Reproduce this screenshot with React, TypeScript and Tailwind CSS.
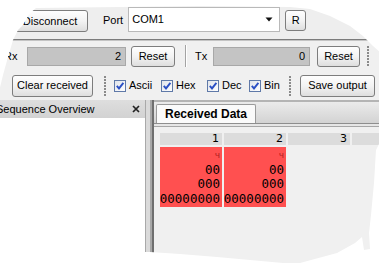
import React from "react";

function Btn({ children, className }: { children: React.ReactNode; className: string }) {
  return (
    <div
      className={`flex shrink-0 items-center justify-center rounded-[3px] border border-[#7d7d7d] bg-gradient-to-b from-[#fefefe] via-[#f3f3f3] to-[#dedede] text-[11px] text-black ${className}`}
    >
      {children}
    </div>
  );
}

function Grip({ className }: { className: string }) {
  return (
    <div className={`flex shrink-0 flex-col gap-[1px] ${className}`}>
      {[0, 1, 2, 3, 4, 5, 6].map((i) => (
        <span key={i} className="block h-[2px] w-[2px] bg-[#8a8a8a]" />
      ))}
    </div>
  );
}

function Check({ label, className }: { label: string; className: string }) {
  return (
    <div className={`flex shrink-0 items-center gap-[3px] ${className}`}>
      <svg width="12" height="12" viewBox="0 0 12 12">
        <defs>
          <linearGradient id="cbg" x1="0" y1="0" x2="1" y2="1">
            <stop offset="0" stopColor="#dfe3ea" />
            <stop offset="1" stopColor="#ffffff" />
          </linearGradient>
        </defs>
        <rect x="0.5" y="0.5" width="11" height="11" fill="url(#cbg)" stroke="#5f79a8" />
        <path d="M2.8 5.8 L5 8.4 L9.4 2.9" fill="none" stroke="#2a4fc4" strokeWidth="1.9" />
      </svg>
      <span className="text-[11px]">{label}</span>
    </div>
  );
}

export default function App() {
  return (
    <div className="relative h-[267px] w-[379px] overflow-hidden bg-white font-['Liberation_Sans',Arial,sans-serif] text-[11px] text-black">
      <div className="flex h-full flex-col">
        {/* Row 1 */}
        <div className="flex h-[39px] shrink-0 items-start bg-[#eeeeee]">
          <Btn className="ml-[12px] mt-[10px] h-[22px] w-[76px]">Disconnect</Btn>
          <span className="ml-[15px] mt-[14px] leading-[13px]">Port</span>
          <div className="ml-[5px] mt-[7px] flex h-[25px] w-[152px] shrink-0 items-center border border-[#b9b9b9] bg-white">
            <span className="ml-[3px] leading-[13px]">COM1</span>
            <svg className="ml-auto mr-[6px]" width="8" height="5" viewBox="0 0 8 5">
              <path d="M0.5 0.5 H7.5 L4 4.5 Z" fill="#111" />
            </svg>
          </div>
          <Btn className="ml-[5px] mt-[10px] h-[21px] w-[21px]">R</Btn>
        </div>
        <div className="h-px shrink-0 bg-[#7c7c7c]" />
        <div className="h-px shrink-0 bg-[#c4c4c4]" />

        {/* Row 2 */}
        <div className="flex h-[30px] shrink-0 items-center bg-[#f0f0f0]">
          <span className="ml-[4px] w-[23px] shrink-0">Rx</span>
          <div className="flex h-[19px] w-[99px] shrink-0 items-center justify-end border border-[#a8a8a8] bg-[#c4c4c4] pr-[4px]">
            2
          </div>
          <Btn className="ml-[5px] h-[21px] w-[44px]">Reset</Btn>
          <div className="ml-[10px] flex h-[22px] shrink-0">
            <span className="block w-px bg-[#a3a3a3]" />
            <span className="block w-px bg-white" />
          </div>
          <span className="ml-[8px] w-[18px] shrink-0">Tx</span>
          <div className="flex h-[19px] w-[97px] shrink-0 items-center justify-end border border-[#a8a8a8] bg-[#c4c4c4] pr-[4px]">
            0
          </div>
          <Btn className="ml-[7px] h-[21px] w-[43px]">Reset</Btn>
          <Grip className="ml-[7px]" />
        </div>

        {/* Row 3 */}
        <div className="flex h-[29px] shrink-0 items-center bg-[#f0f0f0]">
          <Btn className="ml-[12px] h-[22px] w-[81px]">Clear received</Btn>
          <Grip className="ml-[11px]" />
          <Check label="Ascii" className="ml-[8px] w-[47px]" />
          <Check label="Hex" className="w-[46px]" />
          <Check label="Dec" className="w-[42px]" />
          <Check label="Bin" className="w-[40px]" />
          <Grip className="" />
          <Btn className="ml-[9px] h-[22px] w-[75px]">Save output</Btn>
        </div>

        {/* Main */}
        <div className="flex min-h-0 flex-1">
          {/* Left panel */}
          <div className="flex w-[145px] shrink-0 flex-col">
            <div className="flex h-[18px] shrink-0 items-center bg-gradient-to-b from-[#dedede] to-[#d2d2d2]">
              <span className="-ml-[4px] whitespace-nowrap">Sequence Overview</span>
              <svg className="ml-auto mr-[5px]" width="8" height="8" viewBox="0 0 8 8">
                <path d="M1 1 L7 7 M7 1 L1 7" stroke="#222" strokeWidth="1.7" />
              </svg>
            </div>
            <div className="flex-1 bg-white" />
          </div>
          {/* Splitter */}
          <div className="flex w-[9px] shrink-0">
            <span className="block w-px bg-[#a9a9a9]" />
            <span className="block w-[4px] bg-[#dadada]" />
            <span className="block w-[2px] bg-[#a8a8a8]" />
            <span className="block w-[2px] bg-[#6f6f6f]" />
          </div>
          {/* Right panel */}
          <div className="flex min-w-0 flex-1 flex-col">
            <div className="h-[2px] shrink-0 bg-[#b4b4b4]" />
            <div className="flex h-[21px] shrink-0 items-end bg-gradient-to-b from-[#ebebeb] to-[#d3d3d3]">
              <div className="ml-[2px] flex h-[19px] w-[100px] items-center rounded-t-[2px] border border-b-0 border-[#9a9a9a] bg-[#fafafa] pl-[8px] text-[12px] font-bold">
                Received Data
              </div>
            </div>
            <div className="h-px shrink-0 bg-[#8e8e8e]" />
            <div className="h-[2px] shrink-0 bg-[#e6e6e6]" />
            <div className="h-px shrink-0 bg-[#a6a6a6]" />
            <div className="flex-1 bg-[#f0f0f0] pl-[6px] pt-[6px]">
              <div className="flex h-[12px] gap-[2px] font-['DejaVu_Sans',sans-serif] text-[11px] leading-[12px]">
                <div className="w-[62px] bg-[#dcdcdc] pr-[3px] text-right">1</div>
                <div className="w-[62px] bg-[#dcdcdc] pr-[3px] text-right">2</div>
                <div className="w-[62px] bg-[#dcdcdc] pr-[3px] text-right">3</div>
                <div className="flex-1 bg-[#dcdcdc]" />
              </div>
              <div className="mt-[2px] flex gap-[2px] font-['DejaVu_Sans_Mono',monospace] text-[12.5px] leading-[14.7px]">
                {[0, 1].map((i) => (
                  <div key={i} className="flex h-[60px] w-[62px] flex-col items-end bg-[#ff5050] pr-[2px] pt-[1px]">
                    <span className="font-['DejaVu_Sans',sans-serif] text-[9px] text-[#b02222]">ч</span>
                    <span>00</span>
                    <span>000</span>
                    <span>00000000</span>
                  </div>
                ))}
              </div>
            </div>
          </div>
        </div>
      </div>

      {/* torn-edge mask */}
      <svg className="pointer-events-none absolute inset-0" width="379" height="267" viewBox="0 0 379 267">
        <path
          fill="#ffffff"
          fillRule="evenodd"
          d="M-2 -2 H381 V269 H-2 Z M36 8 L120 7 L200 6 L290 7 L310 9 L330 16 L350 26 L363 36 L373 46 L381 53 L381 140 L376 150 L374 183 L371 215 L369 233 L370 249 L364 250 L362 237 L355 243 L337 253 L300 263 L283 263 L250 260 L217 257 L180 254 L150 252 L-3 252 L-3 100 L3 75 L8 57 L11 47 L13 40 L15 36 L18 30 L22 26 L26 20 L29 14 Z"
        />
      </svg>
    </div>
  );
}
